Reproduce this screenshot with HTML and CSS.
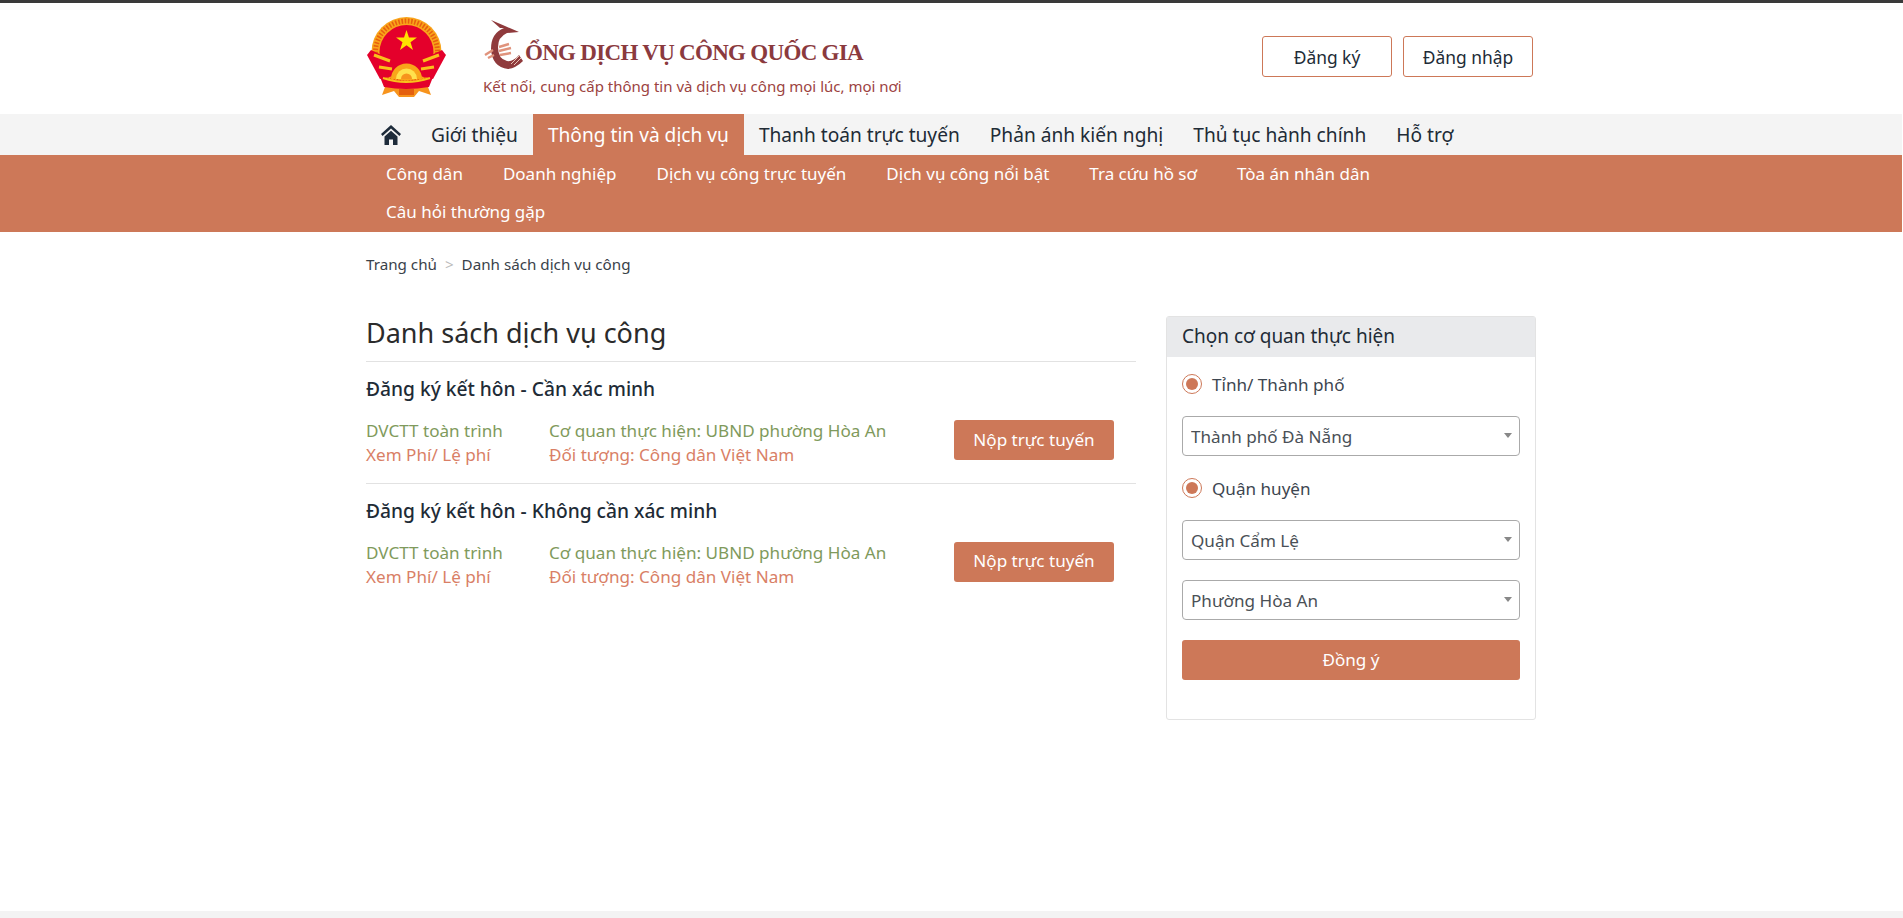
FILE: index.html
```html
<!DOCTYPE html>
<html lang="vi">
<head>
  <meta charset="utf-8">
  <title>Cổng dịch vụ công quốc gia</title>
  <link rel="stylesheet" href="styles.css">
</head>
<body>
  <header class="header">
    <div class="container header-row">
      <svg class="emblem" viewBox="0 0 81 80" aria-hidden="true">
        <path d="M22 62 L16 78 L28 74 L33 80 L48 80 L53 74 L65 78 L59 62 Z" fill="#f7941d"/>
        <circle cx="40.5" cy="35" r="35" fill="#f9a51a"/>
        <circle cx="40.5" cy="35" r="31" fill="none" stroke="#e8600f" stroke-width="5" stroke-dasharray="1.6 1.6"/>
        <circle cx="40.5" cy="35" r="27" fill="#e4002b"/>
        <path d="M1 38 L5 33 L24 42 L32 58 L14 62 Z" fill="#e4002b"/>
        <path d="M80 38 L76 33 L57 42 L49 58 L67 62 Z" fill="#e4002b"/>
        <path d="M8 38 L24 44 M73 38 L57 44 M13 50 L26 52 M68 50 L55 52" stroke="#f9c11a" stroke-width="3"/>
        <path d="M40.5 13 L42.97 20.6 L50.96 20.6 L44.5 25.3 L46.97 32.9 L40.5 28.2 L34.03 32.9 L36.5 25.3 L30.04 20.6 L38.03 20.6 Z" fill="#ffe100"/>
        <path d="M25 62 A15.5 15.5 0 0 1 56 62 Z" fill="#f9a51a"/>
        <path d="M30 62 A10.5 10.5 0 0 1 51 62 Z" fill="#ffe14d"/>
        <path d="M35 62 A5.5 5.5 0 0 1 46 62 Z" fill="#f7941d"/>
        <path d="M14 60 Q40 68 67 60 L63 70 Q40 74 18 70 Z" fill="#e4002b"/>
        <path d="M17 61 Q40 69 64 61" fill="none" stroke="#f9c11a" stroke-width="2"/>
        <path d="M33 72 H48 V78 H33 Z" fill="#e4600f"/>
      </svg>
      <div class="brand">
        <div class="brand-top">
          <svg class="brand-logo" viewBox="0 0 42 52" aria-hidden="true">
            <path d="M21 9 Q8 14 8 30 Q9 48 25 50 Q33 49 40 42 L36 36 Q30 43 24 42 Q15 40 15 28 Q15 18 24 14 L36 13 L22 7 L8 1 L17 9 Z" fill="#8f3a3c"/>
            <path d="M2 36 L10 31 M5 39 L11 36 M16 28 L26 25 M16 32 L28 29 M17 36 L28 34" stroke="#e0937c" stroke-width="2.4" fill="none"/>
            <path d="M28 45 L36 37 M31 46 L38 39" stroke="#e8c3b4" stroke-width="1" fill="none"/>
          </svg>
          <span class="brand-name">ỔNG DỊCH VỤ CÔNG QUỐC GIA</span>
        </div>
        <p class="brand-tagline">Kết nối, cung cấp thông tin và dịch vụ công mọi lúc, mọi nơi</p>
      </div>
      <div class="auth">
        <a class="auth-btn" href="#">Đăng ký</a>
        <a class="auth-btn" href="#">Đăng nhập</a>
      </div>
    </div>
  </header>

  <nav class="nav">
    <div class="container nav-row">
      <a class="nav-item" href="#">
        <svg class="home-icon" viewBox="0 0 20 20" aria-hidden="true">
          <path d="M10 0 L20 9 L18.4 11 L10 3.6 L1.6 11 L0 9 Z"/>
          <path d="M3.5 11.5 L10 5.7 L16.5 11.5 V20 H12 V14.5 H8 V20 H3.5 Z"/>
        </svg>
      </a>
      <a class="nav-item" href="#">Giới thiệu</a>
      <a class="nav-item active" href="#">Thông tin và dịch vụ</a>
      <a class="nav-item" href="#">Thanh toán trực tuyến</a>
      <a class="nav-item" href="#">Phản ánh kiến nghị</a>
      <a class="nav-item" href="#">Thủ tục hành chính</a>
      <a class="nav-item" href="#">Hỗ trợ</a>
    </div>
  </nav>

  <div class="subnav">
    <div class="container subnav-row">
      <a href="#">Công dân</a>
      <a href="#">Doanh nghiệp</a>
      <a href="#">Dịch vụ công trực tuyến</a>
      <a href="#">Dịch vụ công nổi bật</a>
      <a href="#">Tra cứu hồ sơ</a>
      <a href="#">Tòa án nhân dân</a>
      <a href="#">Câu hỏi thường gặp</a>
    </div>
  </div>

  <main class="container main">
    <div class="breadcrumb">
      <a href="#">Trang chủ</a>
      <span class="sep">&gt;</span>
      <a href="#">Danh sách dịch vụ công</a>
    </div>

    <div class="columns">
      <section class="list">
        <h1>Danh sách dịch vụ công</h1>

        <article class="item">
          <h2>Đăng ký kết hôn - Cần xác minh</h2>
          <div class="item-row">
            <div class="item-col">
              <a class="green" href="#">DVCTT toàn trình</a>
              <a class="salmon" href="#">Xem Phí/ Lệ phí</a>
            </div>
            <div class="item-col">
              <span class="green">Cơ quan thực hiện: UBND phường Hòa An</span>
              <span class="salmon">Đối tượng: Công dân Việt Nam</span>
            </div>
            <a class="btn submit-btn" href="#">Nộp trực tuyến</a>
          </div>
        </article>

        <article class="item">
          <h2>Đăng ký kết hôn - Không cần xác minh</h2>
          <div class="item-row">
            <div class="item-col">
              <a class="green" href="#">DVCTT toàn trình</a>
              <a class="salmon" href="#">Xem Phí/ Lệ phí</a>
            </div>
            <div class="item-col">
              <span class="green">Cơ quan thực hiện: UBND phường Hòa An</span>
              <span class="salmon">Đối tượng: Công dân Việt Nam</span>
            </div>
            <a class="btn submit-btn" href="#">Nộp trực tuyến</a>
          </div>
        </article>
      </section>

      <aside class="panel">
        <div class="panel-head">Chọn cơ quan thực hiện</div>
        <form class="panel-body">
          <label class="radio"><input type="radio" name="level1" checked><span class="radio-mark"></span>Tỉnh/ Thành phố</label>
          <div class="select-wrap">
            <select><option>Thành phố Đà Nẵng</option></select>
          </div>
          <label class="radio"><input type="radio" name="level2" checked><span class="radio-mark"></span>Quận huyện</label>
          <div class="select-wrap">
            <select><option>Quận Cẩm Lệ</option></select>
          </div>
          <div class="select-wrap">
            <select><option>Phường Hòa An</option></select>
          </div>
          <button class="btn agree-btn" type="button">Đồng ý</button>
        </form>
      </aside>
    </div>
  </main>

  <footer class="footer"></footer>
</body>
</html>
```

FILE: styles.css
```css
* {
  box-sizing: border-box;
}

html,
body {
  height: 100%;
}

body {
  margin: 0;
  padding-right: 1px;
  display: flex;
  flex-direction: column;
  border-top: 3px solid #3a3a3a;
  background-color: #fff;
  color: #212b36;
  font-family: "Noto Sans", "Open Sans", sans-serif;
  font-size: 16px;
  overflow: hidden;
}

a {
  color: inherit;
  text-decoration: none;
}

.container {
  width: 1170px;
  margin: 0 auto;
}

/* header */
.header {
  height: 111px;
}

.header-row {
  display: flex;
  align-items: flex-start;
  height: 100%;
}

.emblem {
  width: 81px;
  height: 80px;
  margin-top: 14px;
  flex: none;
}

.brand {
  margin-left: 36px;
}

.brand-top {
  display: flex;
  align-items: flex-end;
  height: 52px;
  margin-top: 16px;
}

.brand-logo {
  width: 42px;
  height: 52px;
  flex: none;
}

.brand-name {
  margin-bottom: 5px;
  color: #8b3a3e;
  font-family: "Liberation Serif", serif;
  font-size: 23px;
  font-weight: bold;
  letter-spacing: -0.7px;
}

.brand-tagline {
  margin: 5px 0 0;
  color: #9c4341;
  font-size: 15px;
}

.auth {
  display: flex;
  gap: 11px;
  margin: 33px 3px 0 auto;
}

.auth-btn {
  display: flex;
  align-items: center;
  justify-content: center;
  width: 130px;
  height: 41px;
  border: 1px solid #cd7858;
  border-radius: 3px;
  font-size: 17.4px;
}

/* menus */
.nav {
  height: 41px;
  background-color: #f4f4f4;
}

.nav-row {
  display: flex;
  height: 100%;
}

.nav-item {
  display: flex;
  align-items: center;
  padding: 1px 15px 0;
  font-size: 19.15px;
}

.nav-item.active {
  background-color: #cd7858;
  color: #fff;
}

.home-icon {
  width: 20px;
  height: 20px;
  fill: #1d2b3a;
}

.subnav {
  height: 77px;
  background-color: #cd7858;
}

.subnav-row {
  display: flex;
  flex-wrap: wrap;
}

.subnav-row a {
  padding: 0 20px;
  color: #fff;
  font-size: 17px;
  line-height: 38px;
}

/* content */
.main {
  flex: 1;
}

.breadcrumb {
  display: flex;
  align-items: center;
  gap: 8px;
  margin-top: 21px;
  color: #3a424a;
  font-size: 15.2px;
  line-height: 22px;
}

.breadcrumb .sep {
  color: #bbb;
}

.columns {
  display: flex;
  gap: 30px;
  margin-top: 41px;
}

.list {
  width: 770px;
}

.list h1 {
  margin: 0;
  color: #2b2b2b;
  font-size: 27px;
  font-weight: normal;
  line-height: 34px;
  height: 45px;
}

.item {
  height: 121.5px;
  border-top: 1px solid #e2e2e2;
}

.item h2 {
  margin: 0;
  padding-top: 14px;
  font-size: 19.2px;
  font-weight: 500;
  line-height: 26px;
}

.item-row {
  display: grid;
  grid-template-columns: 183px 405px 160px;
  margin-top: 17px;
}

.item-col {
  display: flex;
  flex-direction: column;
  font-size: 17.1px;
  line-height: 24px;
}

.green {
  color: #7f9a5c;
}

.salmon {
  color: #d97f66;
}

.btn {
  display: flex;
  align-items: center;
  justify-content: center;
  height: 40px;
  padding-bottom: 2px;
  border: none;
  border-radius: 3px;
  background-color: #cd7858;
  color: #fff;
  font-family: inherit;
  font-size: 17.1px;
}

.submit-btn {
  margin-top: 1px;
}

/* side panel */
.panel {
  width: 370px;
  height: 404px;
  border: 1px solid #e3e3e3;
  border-radius: 3px;
}

.panel-head {
  height: 40px;
  padding-left: 15px;
  background-color: #e9eaec;
  font-size: 19px;
  line-height: 38px;
}

.panel-body {
  padding: 15px;
}

.radio {
  display: flex;
  align-items: center;
  height: 24px;
  color: #3d4650;
  font-size: 17.1px;
}

.radio input {
  display: none;
}

.radio-mark {
  display: flex;
  align-items: center;
  justify-content: center;
  width: 20px;
  height: 20px;
  margin-right: 10px;
  border: 1px solid #cd7858;
  border-radius: 50%;
}

.radio-mark::after {
  content: "";
  width: 12px;
  height: 12px;
  border-radius: 50%;
  background-color: #cd7858;
}

.select-wrap {
  position: relative;
  margin: 20px 0;
}

.select-wrap::after {
  content: "";
  position: absolute;
  top: 17px;
  right: 8px;
  border-left: 4px solid transparent;
  border-right: 4px solid transparent;
  border-top: 5px solid #888;
}

.select-wrap select {
  display: block;
  width: 100%;
  height: 40px;
  padding: 0 8px;
  border: 1px solid #aaa;
  border-radius: 4px;
  background-color: #fff;
  color: #4a5056;
  font-family: inherit;
  font-size: 17.1px;
  appearance: none;
}

.agree-btn {
  width: 100%;
}

.footer {
  height: 7px;
  margin-right: -1px;
  background-color: #f3f3f3;
}
```
